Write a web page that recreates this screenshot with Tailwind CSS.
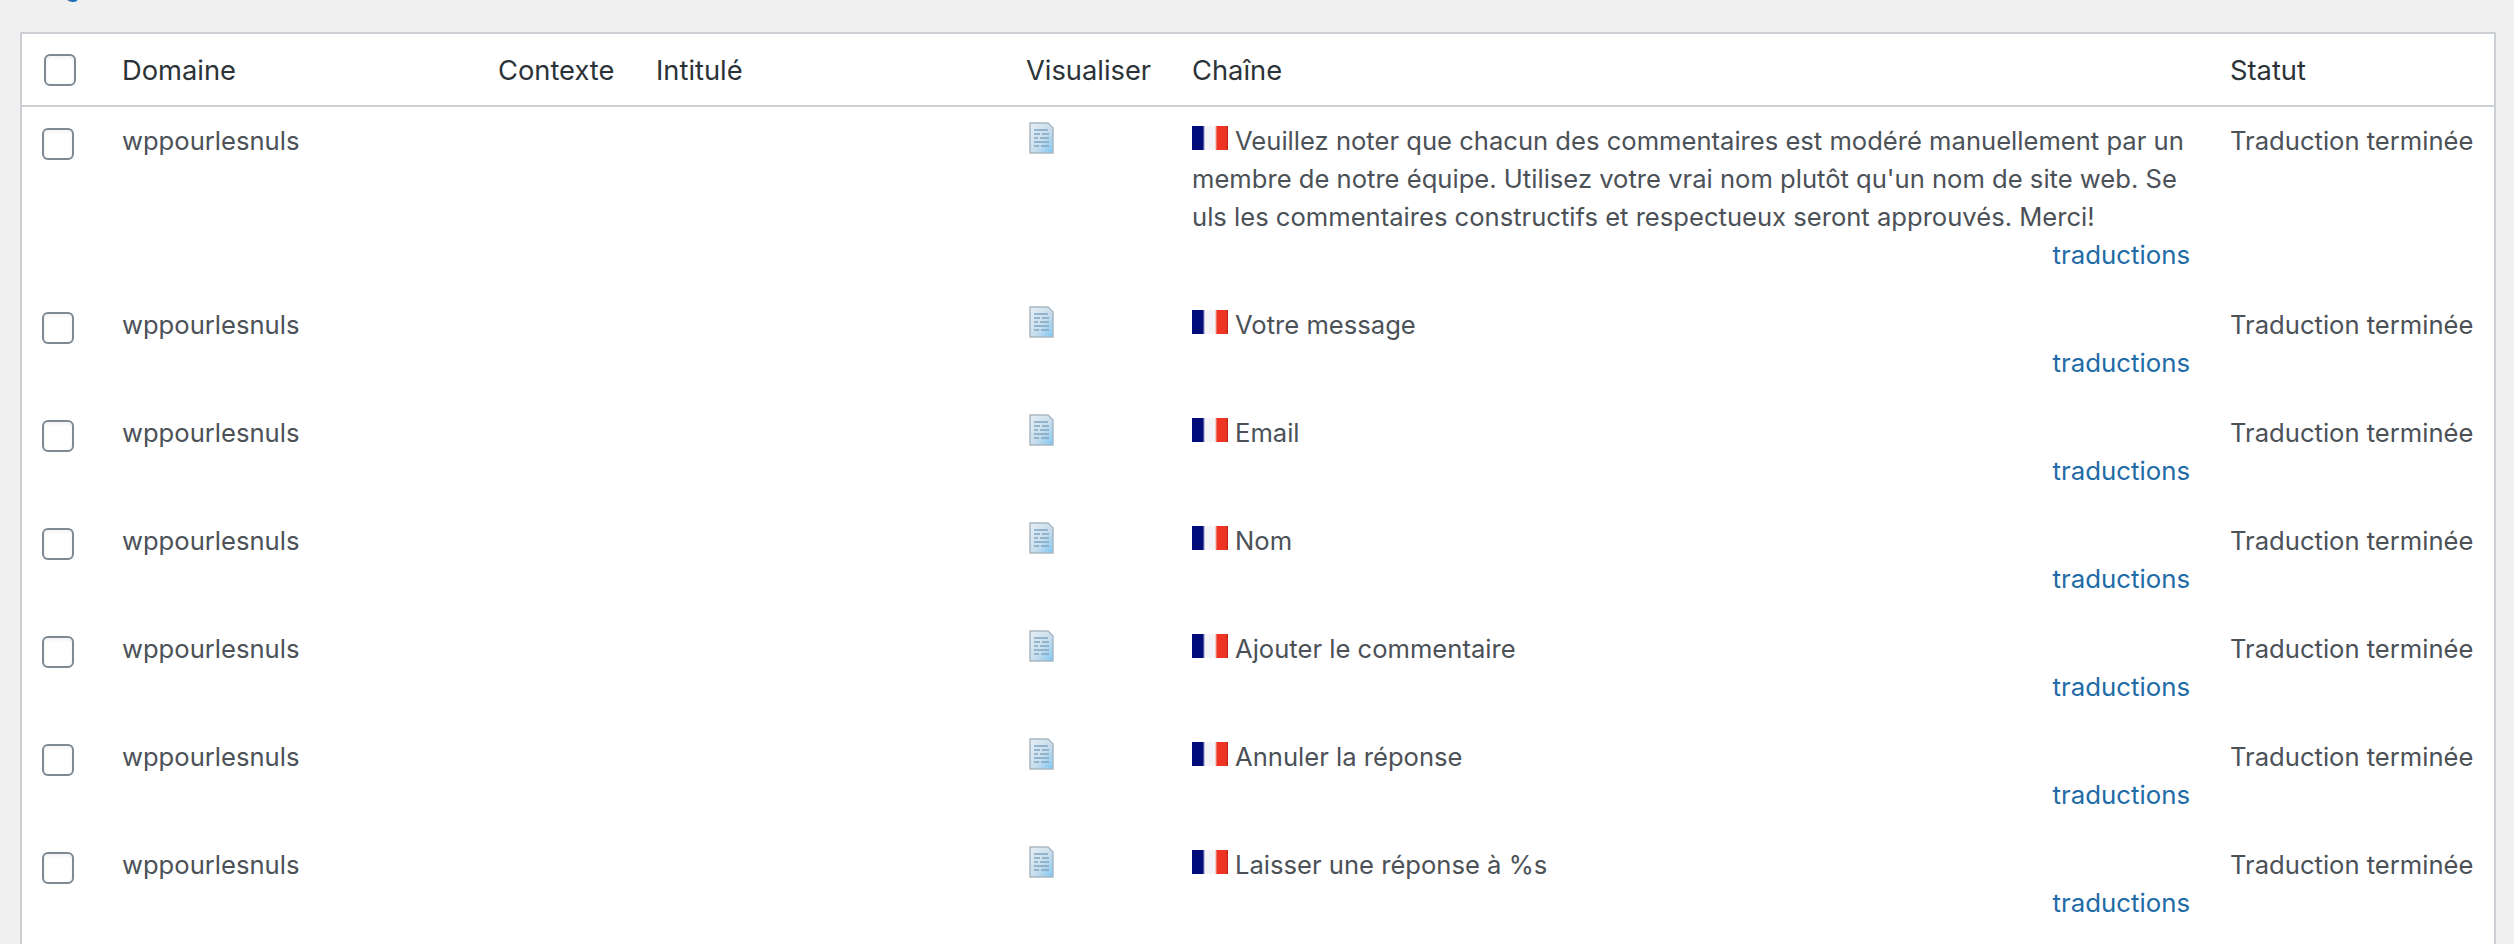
<!DOCTYPE html>
<html lang="fr">
<head>
  <meta charset="UTF-8">
  <title>Traductions</title>
  <script src="https://cdn.jsdelivr.net/npm/@tailwindcss/browser@4"></script>
</head>
<body class="bg-[#f0f0f1] h-[944px] overflow-hidden font-['Inter',sans-serif] text-[25.6px] leading-[38px] text-[#4b5157]">
  <div class="h-[32px] flow-root pl-[34px]">
    <a class="text-[#2271b1] block h-[36px] leading-[36px] -mt-[31px]">Pages</a>
  </div>
  <div class="ml-[20px] w-[2476px] h-[912px] overflow-hidden border-2 border-b-0 border-[#ccd0d4] bg-white">
    <table class="w-full table-fixed border-collapse">
      <colgroup>
        <col class="w-[80px]"><col class="w-[376px]"><col class="w-[158px]"><col class="w-[370px]"><col class="w-[166px]"><col class="w-[1038px]"><col>
      </colgroup>
      <thead>
        <tr class="border-b-2 border-[#ccd0d4] h-[72px] text-left text-[27.3px] text-[#2c3338]">
          <th class="pl-[22px]"><span class="block w-[32px] h-[32px] rounded-[6px] border-2 border-[#7e8993] shadow-inner"></span></th>
          <th class="px-[20px] pt-[2px] font-normal">Domaine</th>
          <th class="px-[20px] pt-[2px] font-normal">Contexte</th>
          <th class="px-[20px] pt-[2px] font-normal">Intitulé</th>
          <th class="px-[20px] pt-[2px] font-normal">Visualiser</th>
          <th class="px-[20px] pt-[2px] font-normal">Chaîne</th>
          <th class="px-[20px] pt-[2px] font-normal">Statut</th>
        </tr>
      </thead>
      <tbody>
        <tr class="align-top">
          <td class="pl-[20px] pt-[21px]"><span class="block w-[32px] h-[32px] rounded-[6px] border-2 border-[#7e8993] shadow-inner"></span></td>
          <td class="px-[20px] pt-[15px] pb-[17px]">wppourlesnuls</td>
          <td class="px-[20px] pt-[15px] pb-[17px]"></td>
          <td class="px-[20px] pt-[15px] pb-[17px]"></td>
          <td class="px-[20px] pt-[15px]"><svg class="ml-[3px] w-[25px] h-[32px]" viewBox="0 0 25 32"><defs><linearGradient id="doc" x1="0" y1="0" x2="1" y2="1"><stop offset="0" stop-color="#e6eef4"/><stop offset="0.55" stop-color="#c9deec"/><stop offset="1" stop-color="#7cc6f2"/></linearGradient></defs><path d="M1 1h18l5 5v25H1z" fill="url(#doc)" stroke="#a9b8c4" stroke-width="1.5"/><path d="M5 8h14M5 12h6M13 12h7M5 16h4M11 16h9M5 20h15M5 24h5M12 24h8" stroke="#7fa5c2" stroke-width="1.5"/></svg></td>
          <td class="px-[20px] pt-[15px] pb-[17px] break-all"><span class="inline-block align-[0px] w-[36px] h-[24px] mr-[7px] bg-[linear-gradient(90deg,#000b7a_0%,#000b7a_30%,#f4f4f8_36%,#f4f4f8_64%,#ee3524_70%,#ee3524_94%,#b52a1c_100%)]"></span>Veuillez noter que chacun des commentaires est modéré manuellement par un membre de notre équipe. Utilisez votre vrai nom plutôt qu'un nom de site web. Seuls les commentaires constructifs et respectueux seront approuvés. Merci!<div class="text-right text-[25.8px] text-[#216ba6]">traductions</div></td>
          <td class="px-[20px] pt-[15px] pb-[17px] whitespace-nowrap">Traduction terminée</td>
        </tr>
        <tr class="align-top">
          <td class="pl-[20px] pt-[21px]"><span class="block w-[32px] h-[32px] rounded-[6px] border-2 border-[#7e8993] shadow-inner"></span></td>
          <td class="px-[20px] pt-[15px] pb-[17px]">wppourlesnuls</td>
          <td class="px-[20px] pt-[15px] pb-[17px]"></td>
          <td class="px-[20px] pt-[15px] pb-[17px]"></td>
          <td class="px-[20px] pt-[15px]"><svg class="ml-[3px] w-[25px] h-[32px]" viewBox="0 0 25 32"><path d="M1 1h18l5 5v25H1z" fill="url(#doc)" stroke="#a9b8c4" stroke-width="1.5"/><path d="M5 8h14M5 12h6M13 12h7M5 16h4M11 16h9M5 20h15M5 24h5M12 24h8" stroke="#7fa5c2" stroke-width="1.5"/></svg></td>
          <td class="px-[20px] pt-[15px] pb-[17px] break-all"><span class="inline-block align-[0px] w-[36px] h-[24px] mr-[7px] bg-[linear-gradient(90deg,#000b7a_0%,#000b7a_30%,#f4f4f8_36%,#f4f4f8_64%,#ee3524_70%,#ee3524_94%,#b52a1c_100%)]"></span>Votre message<div class="text-right text-[25.8px] text-[#216ba6]">traductions</div></td>
          <td class="px-[20px] pt-[15px] pb-[17px] whitespace-nowrap">Traduction terminée</td>
        </tr>
        <tr class="align-top">
          <td class="pl-[20px] pt-[21px]"><span class="block w-[32px] h-[32px] rounded-[6px] border-2 border-[#7e8993] shadow-inner"></span></td>
          <td class="px-[20px] pt-[15px] pb-[17px]">wppourlesnuls</td>
          <td class="px-[20px] pt-[15px] pb-[17px]"></td>
          <td class="px-[20px] pt-[15px] pb-[17px]"></td>
          <td class="px-[20px] pt-[15px]"><svg class="ml-[3px] w-[25px] h-[32px]" viewBox="0 0 25 32"><path d="M1 1h18l5 5v25H1z" fill="url(#doc)" stroke="#a9b8c4" stroke-width="1.5"/><path d="M5 8h14M5 12h6M13 12h7M5 16h4M11 16h9M5 20h15M5 24h5M12 24h8" stroke="#7fa5c2" stroke-width="1.5"/></svg></td>
          <td class="px-[20px] pt-[15px] pb-[17px] break-all"><span class="inline-block align-[0px] w-[36px] h-[24px] mr-[7px] bg-[linear-gradient(90deg,#000b7a_0%,#000b7a_30%,#f4f4f8_36%,#f4f4f8_64%,#ee3524_70%,#ee3524_94%,#b52a1c_100%)]"></span>Email<div class="text-right text-[25.8px] text-[#216ba6]">traductions</div></td>
          <td class="px-[20px] pt-[15px] pb-[17px] whitespace-nowrap">Traduction terminée</td>
        </tr>
        <tr class="align-top">
          <td class="pl-[20px] pt-[21px]"><span class="block w-[32px] h-[32px] rounded-[6px] border-2 border-[#7e8993] shadow-inner"></span></td>
          <td class="px-[20px] pt-[15px] pb-[17px]">wppourlesnuls</td>
          <td class="px-[20px] pt-[15px] pb-[17px]"></td>
          <td class="px-[20px] pt-[15px] pb-[17px]"></td>
          <td class="px-[20px] pt-[15px]"><svg class="ml-[3px] w-[25px] h-[32px]" viewBox="0 0 25 32"><path d="M1 1h18l5 5v25H1z" fill="url(#doc)" stroke="#a9b8c4" stroke-width="1.5"/><path d="M5 8h14M5 12h6M13 12h7M5 16h4M11 16h9M5 20h15M5 24h5M12 24h8" stroke="#7fa5c2" stroke-width="1.5"/></svg></td>
          <td class="px-[20px] pt-[15px] pb-[17px] break-all"><span class="inline-block align-[0px] w-[36px] h-[24px] mr-[7px] bg-[linear-gradient(90deg,#000b7a_0%,#000b7a_30%,#f4f4f8_36%,#f4f4f8_64%,#ee3524_70%,#ee3524_94%,#b52a1c_100%)]"></span>Nom<div class="text-right text-[25.8px] text-[#216ba6]">traductions</div></td>
          <td class="px-[20px] pt-[15px] pb-[17px] whitespace-nowrap">Traduction terminée</td>
        </tr>
        <tr class="align-top">
          <td class="pl-[20px] pt-[21px]"><span class="block w-[32px] h-[32px] rounded-[6px] border-2 border-[#7e8993] shadow-inner"></span></td>
          <td class="px-[20px] pt-[15px] pb-[17px]">wppourlesnuls</td>
          <td class="px-[20px] pt-[15px] pb-[17px]"></td>
          <td class="px-[20px] pt-[15px] pb-[17px]"></td>
          <td class="px-[20px] pt-[15px]"><svg class="ml-[3px] w-[25px] h-[32px]" viewBox="0 0 25 32"><path d="M1 1h18l5 5v25H1z" fill="url(#doc)" stroke="#a9b8c4" stroke-width="1.5"/><path d="M5 8h14M5 12h6M13 12h7M5 16h4M11 16h9M5 20h15M5 24h5M12 24h8" stroke="#7fa5c2" stroke-width="1.5"/></svg></td>
          <td class="px-[20px] pt-[15px] pb-[17px] break-all"><span class="inline-block align-[0px] w-[36px] h-[24px] mr-[7px] bg-[linear-gradient(90deg,#000b7a_0%,#000b7a_30%,#f4f4f8_36%,#f4f4f8_64%,#ee3524_70%,#ee3524_94%,#b52a1c_100%)]"></span>Ajouter le commentaire<div class="text-right text-[25.8px] text-[#216ba6]">traductions</div></td>
          <td class="px-[20px] pt-[15px] pb-[17px] whitespace-nowrap">Traduction terminée</td>
        </tr>
        <tr class="align-top">
          <td class="pl-[20px] pt-[21px]"><span class="block w-[32px] h-[32px] rounded-[6px] border-2 border-[#7e8993] shadow-inner"></span></td>
          <td class="px-[20px] pt-[15px] pb-[17px]">wppourlesnuls</td>
          <td class="px-[20px] pt-[15px] pb-[17px]"></td>
          <td class="px-[20px] pt-[15px] pb-[17px]"></td>
          <td class="px-[20px] pt-[15px]"><svg class="ml-[3px] w-[25px] h-[32px]" viewBox="0 0 25 32"><path d="M1 1h18l5 5v25H1z" fill="url(#doc)" stroke="#a9b8c4" stroke-width="1.5"/><path d="M5 8h14M5 12h6M13 12h7M5 16h4M11 16h9M5 20h15M5 24h5M12 24h8" stroke="#7fa5c2" stroke-width="1.5"/></svg></td>
          <td class="px-[20px] pt-[15px] pb-[17px] break-all"><span class="inline-block align-[0px] w-[36px] h-[24px] mr-[7px] bg-[linear-gradient(90deg,#000b7a_0%,#000b7a_30%,#f4f4f8_36%,#f4f4f8_64%,#ee3524_70%,#ee3524_94%,#b52a1c_100%)]"></span>Annuler la réponse<div class="text-right text-[25.8px] text-[#216ba6]">traductions</div></td>
          <td class="px-[20px] pt-[15px] pb-[17px] whitespace-nowrap">Traduction terminée</td>
        </tr>
        <tr class="align-top">
          <td class="pl-[20px] pt-[21px]"><span class="block w-[32px] h-[32px] rounded-[6px] border-2 border-[#7e8993] shadow-inner"></span></td>
          <td class="px-[20px] pt-[15px] pb-[17px]">wppourlesnuls</td>
          <td class="px-[20px] pt-[15px] pb-[17px]"></td>
          <td class="px-[20px] pt-[15px] pb-[17px]"></td>
          <td class="px-[20px] pt-[15px]"><svg class="ml-[3px] w-[25px] h-[32px]" viewBox="0 0 25 32"><path d="M1 1h18l5 5v25H1z" fill="url(#doc)" stroke="#a9b8c4" stroke-width="1.5"/><path d="M5 8h14M5 12h6M13 12h7M5 16h4M11 16h9M5 20h15M5 24h5M12 24h8" stroke="#7fa5c2" stroke-width="1.5"/></svg></td>
          <td class="px-[20px] pt-[15px] pb-[17px] break-all"><span class="inline-block align-[0px] w-[36px] h-[24px] mr-[7px] bg-[linear-gradient(90deg,#000b7a_0%,#000b7a_30%,#f4f4f8_36%,#f4f4f8_64%,#ee3524_70%,#ee3524_94%,#b52a1c_100%)]"></span>Laisser une réponse à %s<div class="text-right text-[25.8px] text-[#216ba6]">traductions</div></td>
          <td class="px-[20px] pt-[15px] pb-[17px] whitespace-nowrap">Traduction terminée</td>
        </tr>
      </tbody>
    </table>
  </div>
</body>
</html>
